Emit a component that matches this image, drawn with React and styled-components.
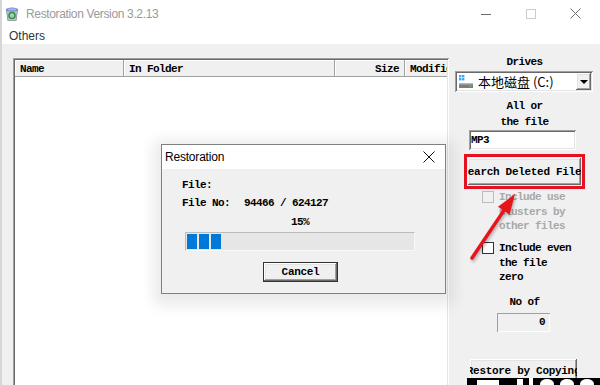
import React from "react";
import styled, { createGlobalStyle } from "styled-components";

const GlobalStyle = createGlobalStyle`
  html, body {
    margin: 0;
    padding: 0;
    background: #f0f0f0;
    overflow: hidden;
  }
`;

const mono = `"Liberation Mono", "DejaVu Sans Mono", monospace`;
const ui = `"Liberation Sans", Arial, sans-serif`;
const raised = `inset -1px -1px #696969, inset 1px 1px #ffffff, inset -2px -2px #a0a0a0, inset 2px 2px #e3e3e3`;
const sunken = `inset 1px 1px #a0a0a0, inset -1px -1px #ffffff, inset 2px 2px #696969, inset -2px -2px #e3e3e3`;

const Window = styled.div`
  position: relative;
  width: 600px;
  height: 385px;
  overflow: hidden;
  display: flex;
  flex-direction: column;
  box-sizing: border-box;
  border-left: 2px solid #d6d6d6;
  background: #f0f0f0;
`;

const TitleBar = styled.div`
  height: 27px;
  flex: none;
  display: flex;
  align-items: center;
  background: #fff;
`;

const AppIcon = styled.svg`
  width: 16px;
  height: 16px;
  margin-left: 2px;
  flex: none;
`;

const TitleText = styled.span`
  flex: 1;
  margin-left: 6px;
  font: 12px ${ui};
  letter-spacing: -0.35px;
  color: #9a9a9a;
`;

const CaptionButton = styled.div`
  width: 45px;
  height: 27px;
  display: flex;
  align-items: center;
  justify-content: center;
  &:last-child {
    margin-right: 2px;
  }
`;

const MenuBar = styled.div`
  height: 17px;
  flex: none;
  display: flex;
  align-items: center;
  padding-left: 7px;
  background: #fff;
  font: 12px ${ui};
  color: #333;
`;

const Client = styled.div`
  flex: 1;
  display: flex;
  min-height: 0;
`;

const ListPane = styled.div`
  flex: 0 0 447px;
  min-width: 0;
  box-sizing: border-box;
  padding: 14px 0 0 11px;
`;

const ListBox = styled.div`
  width: 436px;
  height: 360px;
  background: #fff;
  box-shadow: ${sunken};
  padding: 2px;
  box-sizing: border-box;
  overflow: hidden;
`;

const Header = styled.div`
  display: flex;
  height: 17px;
  overflow: hidden;
`;

const HeaderCell = styled.div`
  flex: 0 0 ${(p) => p.$w}px;
  min-width: 0;
  box-sizing: border-box;
  display: flex;
  align-items: center;
  justify-content: ${(p) => (p.$right ? "flex-end" : "flex-start")};
  padding: 0 6px 0 5px;
  background: #f0f0f0;
  box-shadow: inset -1px -1px #a0a0a0, inset 1px 1px #ffffff;
  font: bold 11px ${mono};
  letter-spacing: -0.6px;
  color: #000;
  white-space: nowrap;
  overflow: hidden;
`;

const Side = styled.div`
  flex: 1;
  min-width: 0;
  display: flex;
  flex-direction: column;
  align-items: flex-start;
  font: bold 11px ${mono};
  letter-spacing: -0.6px;
  color: #000;
`;

const Caption = styled.div`
  width: 100%;
  text-align: center;
  line-height: ${(p) => p.$lh || 13}px;
  margin-top: ${(p) => p.$mt || 0}px;
`;

const Combo = styled.div`
  margin: 2px 0 0 6px;
  width: 138px;
  height: 21px;
  box-sizing: border-box;
  background: #fff;
  box-shadow: ${sunken};
  display: flex;
  align-items: center;
  padding: 2px;
`;

const DriveIcon = styled.svg`
  width: 16px;
  height: 15px;
  flex: none;
  margin-left: 1px;
`;

const ComboText = styled.span`
  flex: 1;
  margin-left: 4px;
  font: 13px "Noto Sans CJK SC", "Noto Sans", sans-serif;
  letter-spacing: 0;
  line-height: 17px;
  color: #000;
  white-space: nowrap;
`;

const ComboArrow = styled.div`
  width: 15px;
  height: 17px;
  flex: none;
  box-sizing: border-box;
  background: #f0f0f0;
  box-shadow: ${raised};
  display: flex;
  align-items: center;
  justify-content: center;
  &::after {
    content: "";
    border-left: 4px solid transparent;
    border-right: 4px solid transparent;
    border-top: 4px solid #000;
  }
`;

const TextInput = styled.div`
  margin: 0 0 0 20px;
  width: 107px;
  height: 20px;
  box-sizing: border-box;
  padding: 0 2px;
  background: #fff;
  box-shadow: ${sunken};
  line-height: 20px;
`;

const RedFrame = styled.div`
  margin: 4px 0 0 15px;
  width: 121px;
  height: 35px;
  box-sizing: border-box;
  border: 3px solid #e81123;
  padding: 1px;
`;

const PushButton = styled.div`
  width: ${(p) => p.$w}px;
  height: ${(p) => p.$h}px;
  margin-left: ${(p) => p.$ml || 0}px;
  margin-top: ${(p) => p.$mt || 0}px;
  flex: none;
  box-sizing: border-box;
  background: #f0f0f0;
  box-shadow: ${raised};
  display: flex;
  align-items: center;
  justify-content: center;
  overflow: hidden;
  white-space: nowrap;
  font: bold 11px ${mono};
  letter-spacing: -0.3px;
  color: #000;
`;

const CheckRow = styled.div`
  display: flex;
  align-items: flex-start;
  margin: ${(p) => p.$mt}px 0 0 33px;
`;

const CheckBox = styled.div`
  width: 12px;
  height: 12px;
  box-sizing: border-box;
  margin-top: 1px;
  background: ${(p) => (p.$disabled ? "#f0f0f0" : "#fff")};
  border: 1px solid ${(p) => (p.$disabled ? "#bcbcbc" : "#333")};
  flex: none;
`;

const CheckText = styled.div`
  margin-left: 5px;
  line-height: 14.5px;
  white-space: nowrap;
  color: ${(p) => (p.$disabled ? "#a8a8a8" : "#000")};
`;

const CountBox = styled.div`
  margin: 4.5px 0 0 48px;
  width: 53px;
  height: 19px;
  box-sizing: border-box;
  box-shadow: inset 1px 1px #a0a0a0, inset -1px -1px #ffffff;
  text-align: right;
  padding-right: 5px;
  line-height: 19px;
`;

const Arrow = styled.svg`
  position: absolute;
  left: 460px;
  top: 185px;
  width: 60px;
  height: 80px;
  filter: drop-shadow(1px 2px 1.5px rgba(0, 0, 0, 0.3));
`;

const Strip = styled.svg`
  position: absolute;
  left: 465px;
  top: 378px;
  width: 133px;
  height: 7px;
`;

const Dialog = styled.div`
  position: absolute;
  left: 159px;
  top: 144px;
  width: 285px;
  height: 150px;
  box-sizing: border-box;
  border: 1px solid #808080;
  background: #f0f0f0;
  box-shadow: 0 4px 14px 7px rgba(0, 0, 0, 0.09);
  display: flex;
  flex-direction: column;
`;

const DialogTitle = styled.div`
  height: 24px;
  flex: none;
  background: #fff;
  display: flex;
  align-items: center;
  justify-content: space-between;
  padding: 0 10px 0 3px;
  font: 12px ${ui};
  letter-spacing: -0.2px;
  color: #000;
`;

const DialogBody = styled.div`
  display: flex;
  flex-direction: column;
  align-items: flex-start;
  padding: 9px 0 0 20px;
  font: bold 11px ${mono};
  letter-spacing: -0.6px;
  color: #000;
`;

const Line = styled.div`
  line-height: 14px;
  margin-top: ${(p) => p.$mt || 0}px;
`;

const Value = styled.span`
  margin-left: 14px;
`;

const Percent = styled.div`
  margin: 5px 0 0 3px;
  width: 230px;
  text-align: center;
  line-height: 14px;
`;

const Progress = styled.div`
  margin: 3px 0 0 3px;
  width: 230px;
  height: 19px;
  box-sizing: border-box;
  background: #e6e6e6;
  border: 1px solid #bcbcbc;
  border-right-color: #f8f8f8;
  border-bottom-color: #f8f8f8;
  padding: 1px;
  display: flex;
  gap: 2px;
`;

const Chunk = styled.div`
  width: 10px;
  height: 15px;
  background: #0078d7;
`;

const DefaultButton = styled(PushButton)`
  border: 1px solid #333;
`;

const chunks = [0, 1, 2];

const App = () => {
  return (
    <>
      <GlobalStyle />
      <Window>
        <TitleBar>
          <AppIcon viewBox="0 0 16 16">
            <path d="M2 4 L14 4 L12.5 15 L3.5 15 Z" fill="#8e9aa6" />
            <path d="M3 4.5 L13 4.5 L11.8 14.2 L4.2 14.2 Z" fill="#b9c3cc" />
            <ellipse cx="8" cy="3.6" rx="6.2" ry="2" fill="#6f7fc8" />
            <ellipse cx="8" cy="3.4" rx="4.6" ry="1.2" fill="#a9b6ee" />
            <circle cx="8" cy="9.5" r="3" fill="none" stroke="#2c9a3a" strokeWidth="1.6" />
            <path d="M9.6 6.4 L11.4 7.2 L10 8.6 Z" fill="#2c9a3a" />
          </AppIcon>
          <TitleText>Restoration Version 3.2.13</TitleText>
          <CaptionButton>
            <svg width="10" height="10" viewBox="0 0 10 10">
              <path d="M0 5.5 H10" stroke="#6e6e6e" strokeWidth="1" />
            </svg>
          </CaptionButton>
          <CaptionButton>
            <svg width="10" height="10" viewBox="0 0 10 10">
              <rect x="0.5" y="0.5" width="9" height="9" fill="none" stroke="#cccccc" strokeWidth="1" />
            </svg>
          </CaptionButton>
          <CaptionButton>
            <svg width="11" height="11" viewBox="0 0 11 11">
              <path d="M0.5 0.5 L10.5 10.5 M10.5 0.5 L0.5 10.5" stroke="#707070" strokeWidth="1" />
            </svg>
          </CaptionButton>
        </TitleBar>
        <MenuBar>Others</MenuBar>
        <Client>
          <ListPane>
            <ListBox>
              <Header>
                <HeaderCell $w={109}>Name</HeaderCell>
                <HeaderCell $w={211}>In Folder</HeaderCell>
                <HeaderCell $w={70} $right>Size</HeaderCell>
                <HeaderCell $w={60}>Modified</HeaderCell>
              </Header>
            </ListBox>
          </ListPane>
          <Side>
            <Caption $mt={12}>Drives</Caption>
            <Combo>
              <DriveIcon viewBox="0 0 16 15">
                <rect x="1" y="1" width="2.4" height="2.4" fill="#41a5ee" />
                <rect x="4" y="1" width="2.4" height="2.4" fill="#41a5ee" />
                <rect x="1" y="4" width="2.4" height="2.4" fill="#41a5ee" />
                <rect x="4" y="4" width="2.4" height="2.4" fill="#41a5ee" />
                <rect x="1" y="9" width="14" height="5" fill="#7d7d7d" />
                <rect x="1" y="9" width="14" height="1.5" fill="#b5b5b5" />
                <rect x="11" y="11.5" width="2.5" height="1.2" fill="#3dd63d" />
              </DriveIcon>
              <ComboText>本地磁盘 (C:)</ComboText>
              <ComboArrow />
            </Combo>
            <Caption $mt={7} $lh={15.5}>
              All or
              <br />
              the file
            </Caption>
            <TextInput>MP3</TextInput>
            <RedFrame>
              <PushButton $w={113} $h={27}>Search Deleted Files</PushButton>
            </RedFrame>
            <CheckRow $mt={1}>
              <CheckBox $disabled />
              <CheckText $disabled>
                Include use
                <br />
                clusters by
                <br />
                other files
              </CheckText>
            </CheckRow>
            <CheckRow $mt={7.5}>
              <CheckBox />
              <CheckText>
                Include even
                <br />
                the file
                <br />
                zero
              </CheckText>
            </CheckRow>
            <Caption $mt={11}>No of</Caption>
            <CountBox>0</CountBox>
            <PushButton $w={107} $h={24} $ml={21} $mt={27}>
              Restore by Copying
            </PushButton>
          </Side>
        </Client>

        <Arrow viewBox="0 0 60 80">
          <path d="M10 73 L41.8 25.6" stroke="#e8141b" strokeWidth="3.5" strokeLinecap="round" />
          <path d="M53 9 L47.6 29.5 L36 21.7 Z" fill="#e8141b" />
        </Arrow>

        <Strip viewBox="0 0 133 7">
          <rect width="133" height="7" fill="#000" />
          <rect x="10" y="2" width="22" height="5" fill="#fff" />
          <rect x="50" y="1" width="6" height="6" fill="#fff" />
          <rect x="62" y="0" width="4" height="7" fill="#fff" />
          <ellipse cx="80" cy="6" rx="7" ry="5" fill="#fff" />
          <ellipse cx="100" cy="6" rx="7" ry="5" fill="#fff" />
          <ellipse cx="120" cy="6" rx="7" ry="5" fill="#fff" />
        </Strip>

        <Dialog>
          <DialogTitle>
            Restoration
            <svg width="12" height="12" viewBox="0 0 12 12">
              <path d="M0.5 0.5 L11.5 11.5 M11.5 0.5 L0.5 11.5" stroke="#111" strokeWidth="1" />
            </svg>
          </DialogTitle>
          <DialogBody>
            <Line>File:</Line>
            <Line $mt={4}>
              File No:<Value>94466 / 624127</Value>
            </Line>
            <Percent>15%</Percent>
            <Progress>
              {chunks.map((c) => (
                <Chunk key={c} />
              ))}
            </Progress>
            <DefaultButton $w={75} $h={20} $ml={81} $mt={11}>
              Cancel
            </DefaultButton>
          </DialogBody>
        </Dialog>
      </Window>
    </>
  );
};

export default App;
